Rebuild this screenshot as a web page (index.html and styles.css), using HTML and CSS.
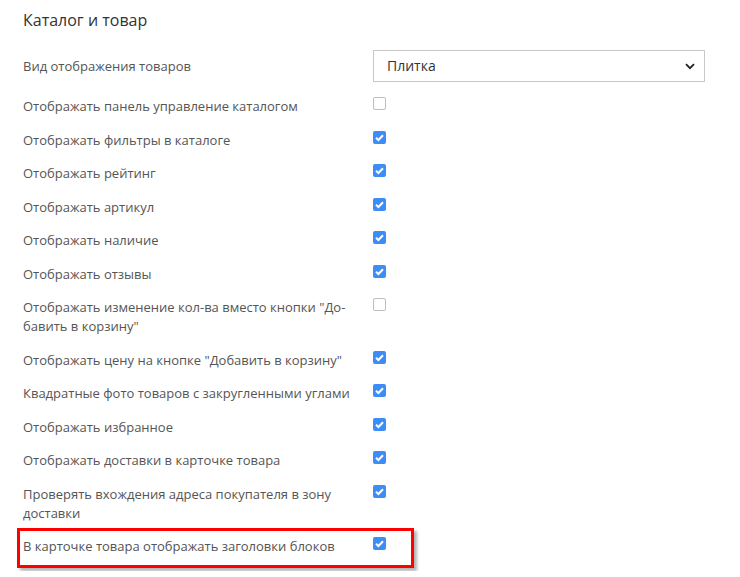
FILE: index.html
```html
<!DOCTYPE html>
<html lang="ru">
<head>
<meta charset="utf-8">
<link rel="stylesheet" href="styles.css">
</head>
<body>
<div class="panel">
  <h2 class="title">Каталог и товар</h2>
  <div class="row row-select">
    <div class="label">Вид отображения товаров</div>
    <div class="select">
      <span class="select-text">Плитка</span>
      <svg class="chevron" width="10" height="7" viewBox="0 0 10 7"><path d="M1 1.2 L5 5.2 L9 1.2" fill="none" stroke="#222" stroke-width="1.8"/></svg>
    </div>
  </div>
  <div class="row"><div class="label">Отображать панель управление каталогом</div><span class="cb"></span></div>
  <div class="row"><div class="label">Отображать фильтры в каталоге</div><span class="cb on"><svg viewBox="0 0 13 13"><path d="M3 6.8 L5.4 9 L10 4.3" fill="none" stroke="#fff" stroke-width="2"/></svg></span></div>
  <div class="row"><div class="label">Отображать рейтинг</div><span class="cb on"><svg viewBox="0 0 13 13"><path d="M3 6.8 L5.4 9 L10 4.3" fill="none" stroke="#fff" stroke-width="2"/></svg></span></div>
  <div class="row"><div class="label">Отображать артикул</div><span class="cb on"><svg viewBox="0 0 13 13"><path d="M3 6.8 L5.4 9 L10 4.3" fill="none" stroke="#fff" stroke-width="2"/></svg></span></div>
  <div class="row"><div class="label">Отображать наличие</div><span class="cb on"><svg viewBox="0 0 13 13"><path d="M3 6.8 L5.4 9 L10 4.3" fill="none" stroke="#fff" stroke-width="2"/></svg></span></div>
  <div class="row"><div class="label">Отображать отзывы</div><span class="cb on"><svg viewBox="0 0 13 13"><path d="M3 6.8 L5.4 9 L10 4.3" fill="none" stroke="#fff" stroke-width="2"/></svg></span></div>
  <div class="row"><div class="label">Отображать изменение кол-ва вместо кнопки "До&shy;бавить в корзину"</div><span class="cb"></span></div>
  <div class="row"><div class="label">Отображать цену на кнопке "Добавить в корзину"</div><span class="cb on"><svg viewBox="0 0 13 13"><path d="M3 6.8 L5.4 9 L10 4.3" fill="none" stroke="#fff" stroke-width="2"/></svg></span></div>
  <div class="row"><div class="label">Квадратные фото товаров с закругленными углами</div><span class="cb on"><svg viewBox="0 0 13 13"><path d="M3 6.8 L5.4 9 L10 4.3" fill="none" stroke="#fff" stroke-width="2"/></svg></span></div>
  <div class="row"><div class="label">Отображать избранное</div><span class="cb on"><svg viewBox="0 0 13 13"><path d="M3 6.8 L5.4 9 L10 4.3" fill="none" stroke="#fff" stroke-width="2"/></svg></span></div>
  <div class="row"><div class="label">Отображать доставки в карточке товара</div><span class="cb on"><svg viewBox="0 0 13 13"><path d="M3 6.8 L5.4 9 L10 4.3" fill="none" stroke="#fff" stroke-width="2"/></svg></span></div>
  <div class="row"><div class="label">Проверять вхождения адреса покупателя в зону доставки</div><span class="cb on"><svg viewBox="0 0 13 13"><path d="M3 6.8 L5.4 9 L10 4.3" fill="none" stroke="#fff" stroke-width="2"/></svg></span></div>
  <div class="row highlighted"><div class="label">В карточке товара отображать заголовки блоков</div><span class="cb on"><svg viewBox="0 0 13 13"><path d="M3 6.8 L5.4 9 L10 4.3" fill="none" stroke="#fff" stroke-width="2"/></svg></span></div>
</div>
</body>
</html>
```
FILE: styles.css
```css
html, body {
  margin: 0;
  padding: 0;
  background: #fff;
}
body {
  font-family: "Open Sans", "Liberation Sans", sans-serif;
  font-size: 13px;
  line-height: 1.43;
  color: #555;
}
.panel {
  padding: 8px 23px 0 23px;
}
.title {
  margin: 0 0 18px 0;
  font-size: 16px;
  font-weight: 400;
  line-height: 24px;
  color: #333;
}
.row {
  display: grid;
  grid-template-columns: 350px 332px;
  align-items: start;
  margin-bottom: 15px;
}
.row-select {
  align-items: center;
}
.label {
  padding-right: 6px;
}
.select {
  box-sizing: border-box;
  height: 32px;
  border: 1px solid #c8c8c8;
  display: flex;
  align-items: center;
  justify-content: space-between;
  padding: 0 9px 0 13px;
  color: #333;
  font-size: 14px;
}
.chevron {
  display: block;
}
.cb {
  box-sizing: border-box;
  width: 13px;
  height: 13px;
  border: 1px solid #bdbdbd;
  border-radius: 2px;
  background: #fff;
  margin-top: 0;
  display: block;
}
.cb.on {
  border: none;
  background: #3c8df5;
}
.cb svg {
  display: block;
  width: 13px;
  height: 13px;
}
.highlighted {
  position: relative;
}
.highlighted::after {
  content: "";
  position: absolute;
  left: -6px;
  top: -9px;
  width: 397px;
  height: 40px;
  box-sizing: border-box;
  border: 3px solid #f00;
  box-shadow: 3px 3px 3px rgba(0, 0, 0, 0.3);
  pointer-events: none;
}
```
